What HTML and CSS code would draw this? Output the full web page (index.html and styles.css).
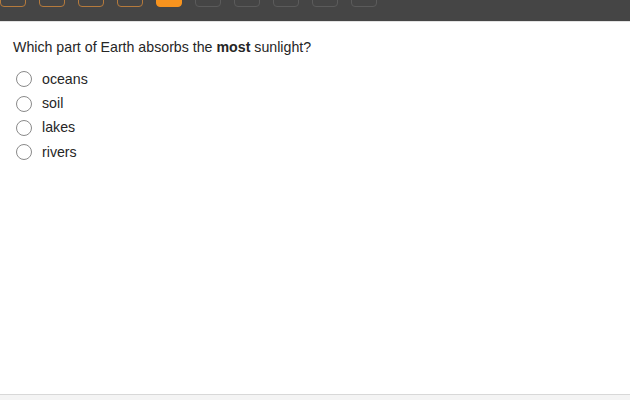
FILE: index.html
```html
<!DOCTYPE html>
<html>
<head>
<meta charset="utf-8">
<link rel="stylesheet" href="styles.css">
</head>
<body>
<div class="topbar">
  <div class="steps">
    <span class="step done"></span>
    <span class="step done"></span>
    <span class="step done"></span>
    <span class="step done"></span>
    <span class="step current"></span>
    <span class="step todo"></span>
    <span class="step todo"></span>
    <span class="step todo"></span>
    <span class="step todo"></span>
    <span class="step todo"></span>
  </div>
</div>
<main class="content">
  <p class="question">Which part of Earth absorbs the <b>most</b> sunlight?</p>
  <ul class="options">
    <li class="option"><span class="radio"></span><span class="label">oceans</span></li>
    <li class="option"><span class="radio"></span><span class="label">soil</span></li>
    <li class="option"><span class="radio"></span><span class="label">lakes</span></li>
    <li class="option"><span class="radio"></span><span class="label">rivers</span></li>
  </ul>
</main>
<footer class="footer"></footer>
</body>
</html>
```
FILE: styles.css
```css
html, body {
  margin: 0;
  padding: 0;
  width: 630px;
  height: 400px;
  overflow: hidden;
  background: #fff;
  font-family: "Liberation Sans", Arial, sans-serif;
  color: #262626;
}
body {
  display: flex;
  flex-direction: column;
}
.topbar {
  height: 21px;
  background: #454545;
  border-bottom: 1px solid #e2e2e2;
  overflow: hidden;
  flex-shrink: 0;
}
.steps {
  display: flex;
  gap: 13px;
  margin-top: -16px;
}
.step {
  width: 26px;
  height: 23px;
  box-sizing: border-box;
  border-radius: 4px;
  flex-shrink: 0;
}
.step.done {
  border: 1.5px solid #b57a3c;
}
.step.current {
  background: #f7931e;
  border: 1.5px solid #f7931e;
}
.step.todo {
  border: 1.5px solid #5b5b5b;
}
.content {
  flex: 1;
  padding: 0 13px;
}
.question {
  margin: 17px 0 0;
  font-size: 14.2px;
  line-height: 17px;
}
.options {
  list-style: none;
  margin: 11px 0 0;
  padding: 0;
}
.option {
  display: flex;
  align-items: center;
  height: 24.4px;
  font-size: 14.2px;
}
.radio {
  width: 16px;
  height: 16px;
  box-sizing: border-box;
  border: 1.4px solid #8a8a8a;
  border-radius: 50%;
  margin-left: 3px;
  margin-right: 10px;
  flex-shrink: 0;
}
.label {
  line-height: 17px;
}
.footer {
  height: 5px;
  background: #f4f4f4;
  border-top: 1px solid #d8d8d8;
  flex-shrink: 0;
}
```
